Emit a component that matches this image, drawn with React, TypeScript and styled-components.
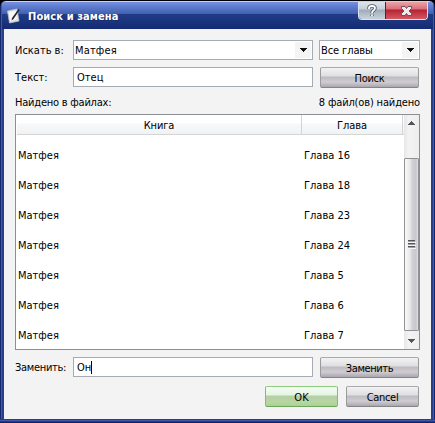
import React from 'react';
import styled, { createGlobalStyle, css } from 'styled-components';

const Global = createGlobalStyle`
  * { box-sizing: border-box; }
  body { margin: 0; background: #000; overflow: hidden; }
`;

const Window = styled.div`
  width: 435px;
  height: 423px;
  padding-top: 1px;
  background: #000;
  color: #000;
  font: 11px/14px 'DejaVu Sans Condensed', 'DejaVu Sans', sans-serif;
  font-stretch: condensed;
  white-space: nowrap;
`;

const Frame = styled.div`
  display: flex;
  flex-direction: column;
  height: 422px;
  padding: 0 4px 4px;
  border-radius: 6px 6px 0 0;
  background:
    linear-gradient(#c5d2f5, #c5d2f5) 0 0 / 100% 1px no-repeat,
    linear-gradient(#7c96e8 0, #617fd2 5px, #4360ae 13px, #213d88 13px, #142b73 28px) 2px 0 / 431px 28px no-repeat,
    linear-gradient(90deg, #15296b 0 1px, #4058b5 1px 2px, #253f91 2px 4px, transparent 4px 431px, #253f91 431px 433px, #4058b5 433px 434px, #15296b 434px) 0 0 / 100% 418px no-repeat,
    linear-gradient(#253f91 0 1px, #3c58b1 1px 2px, #233b8d 2px 3px, #11225e 3px 4px) 0 100% / 100% 4px no-repeat,
    #203b8b;
`;

const TitleBar = styled.header`
  display: flex;
  align-items: flex-start;
  height: 28px;
  padding-left: 2px;
`;

const TitleIcon = styled.svg`
  width: 16px;
  height: 17px;
  margin-top: 6px;
`;

const Title = styled.h1`
  flex: 1;
  margin: 9px 0 0 6px;
  color: #fff;
  font: bold 11px/14px 'DejaVu Sans Condensed', 'DejaVu Sans', sans-serif;
  font-stretch: condensed;
  letter-spacing: 0.1px;
  text-shadow: 1px 1px #172d6c;
`;

const Controls = styled.div`
  display: flex;
  width: 70px;
  height: 18px;
  margin: 1px 3px 0 0;
  border: 1px solid #dae2f2;
  border-top: 0;
  border-radius: 0 0 4px 4px;
  overflow: hidden;
`;

const Control = styled.button<{ $close?: boolean }>`
  display: grid;
  place-items: center;
  width: ${p => (p.$close ? 42 : 26)}px;
  height: 17px;
  padding: 0;
  border: 0;
  border-left: ${p => (p.$close ? '1px solid #6c1634' : '0')};
  background: ${p => p.$close
    ? 'linear-gradient(#e9a3a8 0, #d96f77 7px, #b62232 8px, #d35a62 17px)'
    : 'linear-gradient(#dce3eb 0, #c5cfd9 7px, #9eabb8 8px, #cad3dc 17px)'};
`;

const Content = styled.main`
  flex: 1;
  padding: 11px 11px 0;
  background: #f3f3f3;
`;

const Row = styled.div`
  display: flex;
  align-items: flex-start;
  height: 21px;
  margin-bottom: 6px;
`;

const Label = styled.label<{ $spacing: number }>`
  flex: none;
  width: 58px;
  padding-top: 4px;
  letter-spacing: ${p => p.$spacing}px;
`;

const fieldBox = css`
  flex: none;
  height: 20px;
  border: 1px solid #a4abb2;
  background: #fff;
`;

const Field = styled.div<{ $spacing?: number }>`
  ${fieldBox}
  display: flex;
  align-items: center;
  width: 240px;
  padding: 1px 0 0 3px;
  letter-spacing: ${p => p.$spacing ?? 0}px;
`;

const Caret = styled.i`
  width: 1px;
  height: 13px;
  background: #000;
`;

const Combo = styled.div<{ $width: number; $spacing: number }>`
  ${fieldBox}
  display: flex;
  justify-content: space-between;
  width: ${p => p.$width}px;
  padding: 1px;
  line-height: 18px;
  letter-spacing: ${p => p.$spacing}px;

  & + & { margin-left: 6px; }
`;

const Drop = styled.span`
  display: grid;
  place-items: center;
  width: 16px;
  background: #f4f4f4;
`;

const Button = styled.button<{ $width?: number; $green?: boolean; $spacing?: number }>`
  flex: none;
  width: ${p => p.$width ?? 99}px;
  height: 21px;
  margin-left: 7px;
  padding: 3px 0 0;
  border: 1px solid;
  border-color: ${p => (p.$green ? '#90cb80 #83bd73 #71a55f' : '#aaa9ae #9a999e #858389')};
  border-radius: 2px;
  color: #000;
  font: inherit;
  letter-spacing: ${p => p.$spacing ?? 0}px;
  background: ${p => p.$green
    ? 'linear-gradient(#f5fcf4 0, #e4f5e2 8px, #b5cea9 9px, #b7d79f 15px, #add194 19px)'
    : 'linear-gradient(#f2f2f3 0, #dfdfe2 8px, #bdbbc0 9px, #cfcdd2 14px, #aaa8ae 19px)'};
`;

const Summary = styled.div`
  display: flex;
  justify-content: space-between;
  height: 20px;
  padding-top: 2px;
`;

const Spaced = styled.span<{ $spacing: number }>`
  letter-spacing: ${p => p.$spacing}px;
`;

const List = styled.section`
  display: flex;
  width: 405px;
  height: 236px;
  margin-bottom: 7px;
  border: 1px solid #8c8f93;
  background: #fff;
`;

const Table = styled.div`
  flex: 1;
  padding-left: 1px;
`;

const Header = styled.div`
  display: grid;
  grid-template-columns: 285px 101px;
  height: 20px;
  margin-bottom: 5px;
  border-bottom: 1px solid #d5d5d5;
  background: linear-gradient(#fff 0 8px, #f7f8fa 9px, #f0f2f4);
`;

const Heading = styled.div`
  padding-top: 4px;
  border-right: 1px solid #d4d4d6;
  text-align: center;
  letter-spacing: -0.1px;
`;

const Result = styled.div`
  display: grid;
  grid-template-columns: 286px 100px;
  height: 30px;
  padding-left: 1px;
  line-height: 31px;
`;

const ScrollBar = styled.div`
  display: flex;
  flex-direction: column;
  width: 16px;
  background: linear-gradient(90deg, #e7e7e7, #f3f3f3 5px, #eee);
`;

const Arrow = styled.div<{ $height: number; $top: number }>`
  height: ${p => p.$height}px;
  padding: ${p => p.$top}px 0 0 4px;
  line-height: 0;
`;

const Thumb = styled.div`
  display: grid;
  place-items: center;
  height: 173px;
  border: 1px solid #919194;
  border-radius: 1px;
  background: linear-gradient(90deg, #fafafa, #e8e8ea 5px, #d2d2d8 7px, #c7c7cf 11px, #e1e1e5);
`;

const Footer = styled.footer`
  display: flex;
  justify-content: flex-end;
  padding-top: 2px;
  padding-right: 1px;
  gap: 1px;
`;

const Triangle = ({ up = false, soft = up }: { up?: boolean; soft?: boolean }) => (
  <svg width="7" height="4" viewBox="0 0 7 4" shapeRendering="crispEdges">
    <path d={up ? 'M3 0h1v1h1v1h1v1h1v1H0V3h1V2h1V1h1z' : 'M0 0h7v1H6v1H5v1H4v1H3V3H2V2H1V1H0z'} fill={soft ? '#555' : '#111'} />
  </svg>
);

const results = [16, 18, 23, 24, 5, 6, 7];

export default function App() {
  return (
    <Window>
      <Global />
      <Frame>
        <TitleBar>
          <TitleIcon viewBox="0 0 16 17">
            <path d="M1.5 4 11 2 13 14 3.5 16z" fill="#dfe3e4" stroke="#c3cad0" strokeWidth=".7" />
            <path d="M3 5 10 4 11 12 4 14z" fill="#f9faf8" />
            <path d="m6 11 6.5-9 1.2.8L7.5 12 5.5 13.500z" fill="#1c242c" />
          </TitleIcon>
          <Title>Поиск и замена</Title>
          <Controls>
            <Control aria-label="Help">
              <svg width="12" height="14" viewBox="0 0 12 14">
                <path d="M3 5V4q0-2 3-2t3 2q0 1.5-1.5 2.5T6 9M6 10.500V12" fill="none" stroke="#515968" strokeWidth="3.5" />
                <path d="M3 5V4q0-2 3-2t3 2q0 1.5-1.5 2.5T6 9M6 10.500V12" fill="none" stroke="#fff" strokeWidth="1.8" />
              </svg>
            </Control>
            <Control $close aria-label="Close">
              <svg width="11" height="10" viewBox="0 0 11 10">
                <path d="M.5.5h3.500l1.500 2 1.500-2h3.500v2L8 5l2.500 2.500v2H7l-1.500-2-1.500 2H.5v-2L3 5 .5 2.500z" fill="#f3e9ec" stroke="#68505c" />
              </svg>
            </Control>
          </Controls>
        </TitleBar>
        <Content>
          <Row>
            <Label $spacing={0}>Искать в:</Label>
            <Combo $width={240} $spacing={0.15}>Матфея<Drop><Triangle /></Drop></Combo>
            <Combo $width={101} $spacing={-0.1}>Все главы<Drop><Triangle /></Drop></Combo>
          </Row>
          <Row>
            <Label $spacing={0}>Текст:</Label>
            <Field>Отец</Field>
            <Button $spacing={-0.3}>Поиск</Button>
          </Row>
          <Summary>
            <Spaced $spacing={-0.22}>Найдено в файлах:</Spaced>
            <Spaced $spacing={-0.15}>8 файл(ов) найдено</Spaced>
          </Summary>
          <List>
            <Table>
              <Header><Heading>Книга</Heading><Heading>Глава</Heading></Header>
              {results.map(chapter => (
                <Result key={chapter}><span>Матфея</span><span>Глава {chapter}</span></Result>
              ))}
            </Table>
            <ScrollBar>
              <Arrow $height={43} $top={6}><Triangle up /></Arrow>
              <Thumb>
                <svg width="8" height="9" shapeRendering="crispEdges">
                  <path d="M0 2.500h8M0 5.500h8M0 8.500h8" stroke="#f5f5f7" />
                  <path d="M0 .5h7M0 3.500h7M0 6.500h7" stroke="#555559" />
                  <path d="M0 1.500h7M0 4.500h7M0 7.500h7" stroke="#a0a0a5" />
                </svg>
              </Thumb>
              <Arrow $height={18} $top={8}><Triangle soft /></Arrow>
            </ScrollBar>
          </List>
          <Row>
            <Label $spacing={-0.3}>Заменить:</Label>
            <Field>Он<Caret /></Field>
            <Button $spacing={-0.4}>Заменить</Button>
          </Row>
          <Footer>
            <Button $width={73} $green>OK</Button>
            <Button $width={73} $spacing={-0.3}>Cancel</Button>
          </Footer>
        </Content>
      </Frame>
    </Window>
  );
}
